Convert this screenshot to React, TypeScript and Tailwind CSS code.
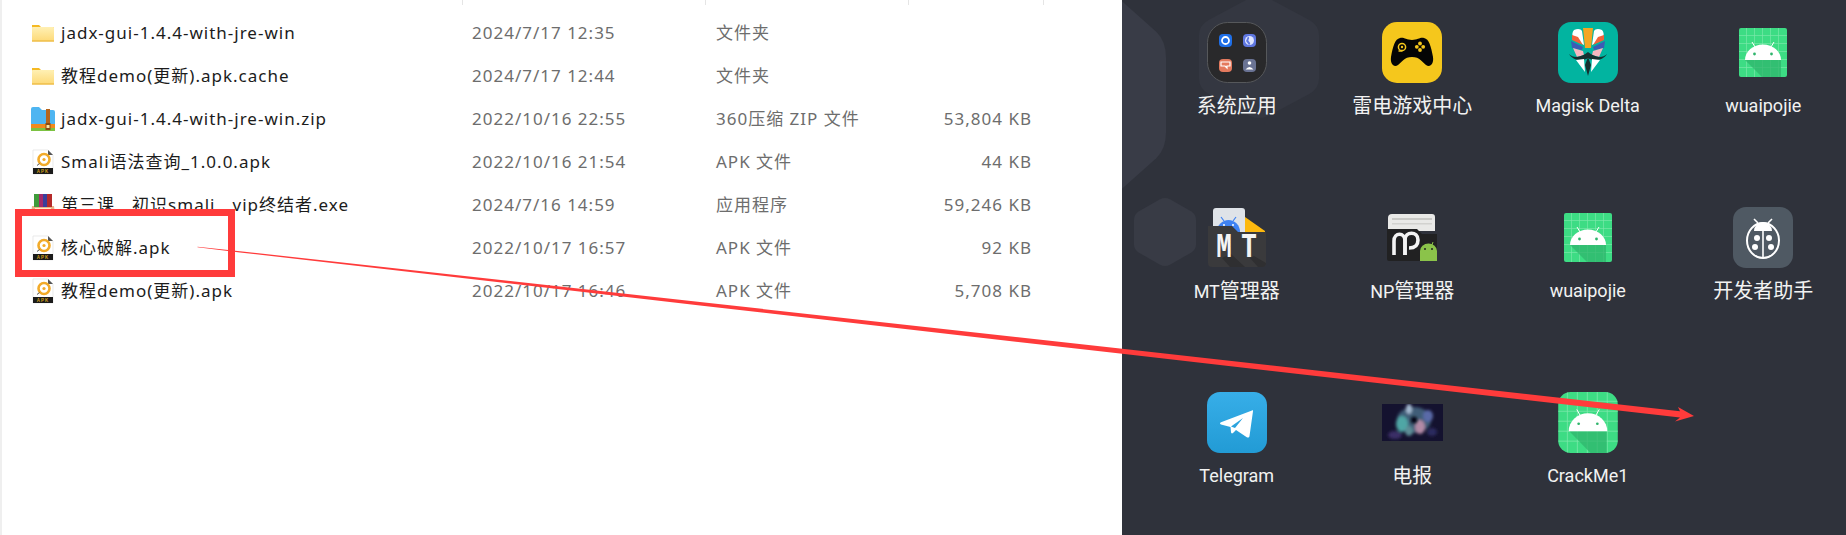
import { ReactNode } from 'react'

const files = [
  { name: 'jadx-gui-1.4.4-with-jre-win', date: '2024/7/17 12:35', type: '文件夹', size: '', icon: 'folder' },
  { name: '教程demo(更新).apk.cache', date: '2024/7/17 12:44', type: '文件夹', size: '', icon: 'folder' },
  { name: 'jadx-gui-1.4.4-with-jre-win.zip', date: '2022/10/16 22:55', type: '360压缩 ZIP 文件', size: '53,804 KB', icon: 'zip' },
  { name: 'Smali语法查询_1.0.0.apk', date: '2022/10/16 21:54', type: 'APK 文件', size: '44 KB', icon: 'apk' },
  { name: '第三课__初识smali__vip终结者.exe', date: '2024/7/16 14:59', type: '应用程序', size: '59,246 KB', icon: 'exe' },
  { name: '核心破解.apk', date: '2022/10/17 16:57', type: 'APK 文件', size: '92 KB', icon: 'apk' },
  { name: '教程demo(更新).apk', date: '2022/10/17 16:46', type: 'APK 文件', size: '5,708 KB', icon: 'apk' },
]

function FileIcon({ kind }: { kind: string }) {
  if (kind === 'folder') {
    return (
      <svg width="24" height="24" viewBox="0 0 24 24">
        <defs>
          <linearGradient id="fold" x1="0" y1="0" x2="0" y2="1">
            <stop offset="0" stopColor="#fff0b4" />
            <stop offset="1" stopColor="#fdd976" />
          </linearGradient>
        </defs>
        <path d="M1 4h7l2 2h13v2H1z" fill="#f5b923" />
        <rect x="1" y="6" width="22" height="14.500" rx="0.5" fill="url(#fold)" />
        <rect x="1" y="19.500" width="22" height="1" fill="#e8b030" />
      </svg>
    )
  }
  if (kind === 'zip') {
    return (
      <svg width="24" height="26" viewBox="0 0 24 26">
        <path d="M0 3q0-2 2-2h6l3 3h11q2 0 2 2v14H0z" fill="#4eb5f1" />
        <rect x="0" y="18" width="24" height="4" fill="#f08a1d" />
        <rect x="0" y="22" width="24" height="3" fill="#7cc242" />
        <rect x="15" y="3" width="4" height="15" fill="#b5651d" />
        <rect x="14.500" y="17" width="5" height="7" fill="#8a4b12" />
        <rect x="15.500" y="19" width="3" height="3" fill="#fbe3a0" />
      </svg>
    )
  }
  if (kind === 'exe') {
    return (
      <svg width="24" height="26" viewBox="0 0 24 26">
        <path d="M1 14h22l1 8q0 2-2 2H2q-2 0-2-2z" fill="#e8b48a" />
        <rect x="4" y="16" width="16" height="4" fill="#fdf0c8" />
        <rect x="3" y="2" width="5" height="13" fill="#3f9b3a" />
        <rect x="8" y="2" width="4" height="13" fill="#a52a6a" />
        <rect x="12" y="2" width="4" height="13" fill="#3a3f9b" />
        <rect x="16" y="2" width="5" height="13" fill="#b52a2a" />
      </svg>
    )
  }
  return (
    <svg width="24" height="26" viewBox="0 0 24 26">
      <path d="M2 1h15l5 5v19H2z" fill="#fff" stroke="#dcdcdc" strokeWidth="0.6" />
      <path d="M17 1l5 5h-5z" fill="#555" />
      <circle cx="13" cy="10.500" r="5.500" fill="none" stroke="#f2ab2a" strokeWidth="2.600" />
      <circle cx="13" cy="10.500" r="1.600" fill="#f2ab2a" />
      <path d="M6 16.500l2.500-2" stroke="#555" strokeWidth="1" />
      <rect x="2" y="19" width="20" height="6" fill="#1b1b1b" />
      <text x="12" y="24" textAnchor="middle" fontSize="4.500" fontWeight="700" fill="#d9a21c" fontFamily="Liberation Sans">APK</text>
    </svg>
  )
}

function AndroidIcon({ rounded, id }: { rounded?: boolean; id: string }) {
  const w = rounded ? 60 : 48
  const h = rounded ? 61 : 49
  return (
    <svg width={w} height={h} viewBox="0 0 48 49">
      <defs>
        <clipPath id={id}>
          <rect width="48" height="49" rx={rounded ? 10 : 2} />
        </clipPath>
      </defs>
      <g clipPath={`url(#${id})`}>
        <rect width="48" height="49" fill="#3ddc84" />
        {[7, 15, 23, 31, 39].map((p) => (
          <rect key={p} x={p} y="0" width="1" height="49" fill="#7de8ab" opacity="0.65" />
        ))}
        {[7, 15, 23, 31, 39].map((p) => (
          <rect key={p} x="0" y={p} width="48" height="1" fill="#7de8ab" opacity="0.65" />
        ))}
        {rounded ? (
          <path d="M9 31.500h30v17.500H26z" fill="#2fb56c" opacity="0.75" />
        ) : (
          <path d="M6 32h36v17H23z" fill="#2fb56c" opacity="0.75" />
        )}
      </g>
      {rounded ? (
        <>
          <path d="M15 14l2.500 4.500M33 14l-2.500 4.500" stroke="#fff" strokeWidth="0.8" />
          <path d="M8.500 31.500a15.500 14.500 0 0 1 31 0z" fill="#fff" />
          <circle cx="16.500" cy="25.500" r="1.100" fill="#2fb56c" />
          <circle cx="31.500" cy="25.500" r="1.100" fill="#2fb56c" />
        </>
      ) : (
        <>
          <path d="M13 14l3 5M35 14l-3 5" stroke="#fff" strokeWidth="1" />
          <path d="M6 32a18 15.500 0 0 1 36 0z" fill="#fff" />
          <circle cx="15.500" cy="26" r="1.400" fill="#2fb56c" />
          <circle cx="32.500" cy="26" r="1.400" fill="#2fb56c" />
        </>
      )}
    </svg>
  )
}

function SystemFolder() {
  return (
    <svg width="60" height="61" viewBox="0 0 60 61">
      <rect x="0.5" y="0.5" width="59" height="60" rx="20" fill="#29292b" stroke="#56585b" />
      <rect x="12" y="12" width="13" height="13" rx="4" fill="#1f6fe8" />
      <circle cx="18.500" cy="18.500" r="3.500" fill="none" stroke="#fff" strokeWidth="1.800" />
      <rect x="36" y="12" width="13" height="13" rx="4" fill="#5f77e0" />
      <circle cx="42.500" cy="18.500" r="4.500" fill="#dfe6ff" />
      <path d="M41 14.500c3 2-1 3 1 5s1 3 0 3.500l-3-4z" fill="#5f77e0" />
      <rect x="12" y="37" width="13" height="13" rx="4" fill="#e47a5e" />
      <path d="M14 40h9v4h-3v2l-2-2h-4z" fill="none" stroke="#fff" strokeWidth="1.200" />
      <rect x="36" y="37" width="13" height="13" rx="4" fill="#6a7394" />
      <circle cx="42.500" cy="41" r="1.800" fill="#fff" />
      <path d="M38.500 47.500q4-5 8 0z" fill="#fff" />
    </svg>
  )
}

function GameIcon() {
  return (
    <svg width="60" height="61" viewBox="0 0 60 61">
      <rect width="60" height="61" rx="15" fill="#f5c71c" />
      <path d="M18 16C22 15 24 18 30 18C36 18 38 15 42 16C47 17 49 24 51 35C52 42 48 46 44 43C40 40 38 35 30 35C22 35 20 40 16 43C12 46 8 42 9 35C11 24 13 17 18 16Z" fill="#050505" />
      <circle cx="20" cy="25" r="3.600" fill="none" stroke="#f5c71c" strokeWidth="1.500" />
      <circle cx="20" cy="25" r="1.200" fill="#f5c71c" />
      <path d="M16.500 29h4" stroke="#f5c71c" strokeWidth="1.500" />
      <circle cx="38" cy="21.500" r="1.900" fill="#f5c71c" />
      <circle cx="38" cy="28" r="1.900" fill="#f5c71c" />
      <circle cx="34.800" cy="24.800" r="1.900" fill="#f5c71c" />
      <circle cx="41.200" cy="24.800" r="1.900" fill="#f5c71c" />
    </svg>
  )
}

function MagiskIcon() {
  return (
    <svg width="60" height="61" viewBox="0 0 60 61">
      <rect width="60" height="61" rx="13" fill="#02b4a0" />
      <path d="M25 6h10l-2 20h-6z" fill="#f5a623" />
      <path d="M16 8c4-2 7-1 8 1l2 14-11-6c-1-4-1-7 1-9zM44 8c-4-2-7-1-8 1l-2 14 11-6c1-4 1-7-1-9z" fill="#fff" />
      <path d="M14 13l6 2 5 8-11-5zM46 13l-6 2-5 8 11-5z" fill="#f1623a" />
      <path d="M13 19l12 6-1 3-10-2zM47 19l-12 6 1 3 10-2z" fill="#3c5bb5" />
      <path d="M15 26l10 3 1 4-7 2zM45 26l-10 3-1 4 7 2z" fill="#f6b7c0" />
      <path d="M11 32c5 5 13 3 19-2 6 5 14 7 19 2-3 6-13 8-19 4-6 4-16 2-19-4z" fill="#15302f" />
      <path d="M18 38l8-1 1 13zM42 38l-8-1-1 13z" fill="#fff" />
      <path d="M30 35l3 8-3 11-3-11z" fill="#15302f" />
    </svg>
  )
}

function MtIcon() {
  return (
    <svg width="58" height="59" viewBox="0 0 58 59">
      <rect x="5" y="0" width="32" height="30" rx="3" fill="#dfe3e8" />
      <path d="M9 24a11.500 12 0 0 1 23 0v6H9z" fill="#3f82f2" />
      <circle cx="16" cy="17" r="1" fill="#fff" />
      <circle cx="25" cy="17" r="1" fill="#fff" />
      <path d="M13 9l3 4M28 9l-3 4" stroke="#3f82f2" strokeWidth="1.200" />
      <path d="M37 9l20 14v4H37z" fill="#fdb90f" />
      <path d="M0 18h24l6 6h28v31q0 4-4 4H4q-4 0-4-4z" fill="#3a3a3c" />
      <path d="M14 50l9-4 14 13H22zM42 50l4-2 12 7q0 4-4 4h-4z" fill="#2f2f31" />
      <text transform="translate(16 49) scale(0.72 1)" textAnchor="middle" fontSize="36" fontWeight="700" fill="#f4f4f4" fontFamily="Liberation Mono">M</text>
      <text transform="translate(41 49) scale(0.72 1)" textAnchor="middle" fontSize="36" fontWeight="700" fill="#f4f4f4" fontFamily="Liberation Mono">T</text>
    </svg>
  )
}

function NpIcon() {
  return (
    <svg width="50" height="47" viewBox="0 0 50 47">
      <path d="M1 4q0-4 4-4h40q3 0 3 3v14H1z" fill="#e9e9e7" />
      <rect x="5" y="4" width="40" height="2" fill="#c9c9c6" />
      <rect x="5" y="9" width="40" height="1.500" fill="#d2d2cf" />
      <path d="M0 15h30l5 5h15v25q0 2-2 2H2q-2 0-2-2z" fill="#212122" />
      <path d="M7 41V27c0-9 11-9 11 0v14" fill="none" stroke="#f4f4f4" strokeWidth="3.600" />
      <path d="M18 41V26c0-9 13-9 13 0 0 6-4 8-9 8" fill="none" stroke="#f4f4f4" strokeWidth="3.600" />
      <path d="M33 47V37a8.500 7.500 0 0 1 17 0v10z" fill="#8bc34a" />
      <path d="M38 30l2 2M46 28l-1 3" stroke="#8bc34a" strokeWidth="1" />
      <circle cx="38" cy="35" r="1" fill="#222" />
      <circle cx="45" cy="35" r="1" fill="#222" />
    </svg>
  )
}

function BugIcon() {
  return (
    <svg width="60" height="61" viewBox="0 0 60 61">
      <rect width="60" height="61" rx="13" fill="#4f5963" />
      <path d="M21 12l4 4M39 12l-4 4" stroke="#fff" strokeWidth="1.600" />
      <path d="M21 24a9 9 0 0 1 18 0z" fill="#fff" />
      <ellipse cx="30" cy="33.500" rx="16" ry="17.500" fill="none" stroke="#fff" strokeWidth="2" />
      <path d="M30 24v27" stroke="#fff" strokeWidth="1.600" />
      <circle cx="24" cy="31" r="3" fill="#fff" />
      <circle cx="36" cy="31" r="3" fill="#fff" />
      <circle cx="22" cy="40" r="3" fill="#fff" />
      <circle cx="38" cy="40" r="3" fill="#fff" />
    </svg>
  )
}

function TelegramIcon() {
  return (
    <svg width="60" height="61" viewBox="0 0 60 61">
      <defs>
        <linearGradient id="tg" x1="0" y1="0" x2="0" y2="1">
          <stop offset="0" stopColor="#37aee8" />
          <stop offset="1" stopColor="#229bd5" />
        </linearGradient>
      </defs>
      <rect width="60" height="61" rx="13" fill="url(#tg)" />
      <path d="M45 18.500c.6-.4 1.200 0 1 .8L42.500 44c-.2 1.500-1.500 2-2.700 1.200L29 38l-3 3c-1 .8-2 .3-2-1l-.5-5-9.500-2.500c-1.300-.4-1.300-1.600 0-2.200zM36 26 24 34.500l4 1.500z" fill="#fff" fillRule="evenodd" />
    </svg>
  )
}

function BlurImage() {
  return (
    <svg width="61" height="37" viewBox="0 0 61 37">
      <defs>
        <filter id="soft" x="-30%" y="-30%" width="160%" height="160%">
          <feGaussianBlur stdDeviation="1.800" />
        </filter>
        <clipPath id="blurclip">
          <rect width="61" height="37" />
        </clipPath>
      </defs>
      <g clipPath="url(#blurclip)">
        <rect width="61" height="37" fill="#14122f" />
        <g filter="url(#soft)">
          <ellipse cx="32" cy="16" rx="17" ry="13" fill="#3f5d78" />
          <ellipse cx="20" cy="20" rx="6" ry="8" fill="#4fa6a5" />
          <ellipse cx="38" cy="23" rx="5" ry="7" fill="#b38aa6" />
          <ellipse cx="46" cy="12" rx="5" ry="6" fill="#5a6aa8" />
          <ellipse cx="27" cy="5" rx="3" ry="5" fill="#a6bbd2" />
          <ellipse cx="13" cy="31" rx="7" ry="4" fill="#3a2f66" />
          <ellipse cx="27" cy="27" rx="4" ry="5" fill="#5d8c95" />
          <ellipse cx="50" cy="28" rx="5" ry="4" fill="#2b2a5e" />
        </g>
        <ellipse cx="32" cy="16" rx="3" ry="3.200" fill="#050508" filter="url(#soft)" />
      </g>
    </svg>
  )
}

function Hexagon({ className }: { className: string }) {
  return (
    <svg className={className} viewBox="0 0 100 112" preserveAspectRatio="none">
      <path d="M42 2q8-4 16 0l34 20q8 5 8 14v40q0 9-8 14l-34 20q-8 4-16 0L8 90q-8-5-8-14V36q0-9 8-14z" fill="currentColor" />
    </svg>
  )
}

function Cjk({ children }: { children: ReactNode }) {
  return <span className="text-[20px]">{children}</span>
}

const apps = [
  { label: <Cjk>系统应用</Cjk>, icon: <SystemFolder /> },
  { label: <Cjk>雷电游戏中心</Cjk>, icon: <GameIcon /> },
  { label: 'Magisk Delta', icon: <MagiskIcon /> },
  { label: 'wuaipojie', icon: <AndroidIcon id="droid-a" /> },
  { label: <>MT<Cjk>管理器</Cjk></>, icon: <MtIcon /> },
  { label: <>NP<Cjk>管理器</Cjk></>, icon: <NpIcon /> },
  { label: 'wuaipojie', icon: <AndroidIcon id="droid-b" /> },
  { label: <Cjk>开发者助手</Cjk>, icon: <BugIcon /> },
  { label: 'Telegram', icon: <TelegramIcon /> },
  { label: <Cjk>电报</Cjk>, icon: <BlurImage /> },
  { label: 'CrackMe1', icon: <AndroidIcon rounded id="droid-c" /> },
]

export default function App() {
  return (
    <div className="relative flex h-[535px] w-[1846px] overflow-hidden bg-white">
      <div className="w-[1122px] shrink-0 border-l-2 border-[#efefef] font-['Noto_Sans','Noto_Sans_CJK_SC',sans-serif] text-[17px] tracking-[1px]">
        <div className="grid h-[5px] grid-cols-[461px_243px_203px_135px]">
          <div className="border-r border-[#e5e5e5]" />
          <div className="border-r border-[#e5e5e5]" />
          <div className="border-r border-[#e5e5e5]" />
          <div className="border-r border-[#e5e5e5]" />
        </div>
        <div className="pt-[6px]">
          {files.map((f) => (
            <div key={f.name} className="grid h-[43px] grid-cols-[461px_243px_203px_135px] items-center">
              <div className="flex items-center text-[#1c1c1c]">
                <span className="flex w-[59px] justify-end pr-[6px]">
                  <FileIcon kind={f.icon} />
                </span>
                <span className="whitespace-nowrap">{f.name}</span>
              </div>
              <div className="pl-[9px] text-[#6d6d6d]">{f.date}</div>
              <div className="pl-[10px] whitespace-nowrap text-[#6d6d6d]">{f.type}</div>
              <div className="pr-[12px] text-right text-[#6d6d6d]">{f.size}</div>
            </div>
          ))}
        </div>
      </div>

      <div className="relative flex-1 overflow-hidden bg-[#2f323b]">
        <Hexagon className="absolute top-[-9px] left-[-78px] h-[208px] w-[122px] text-[#393c47]" />
        <Hexagon className="absolute top-[-4px] left-[77px] h-[122px] w-[120px] text-[#343741]" />
        <Hexagon className="absolute top-[198px] left-[12px] h-[68px] w-[62px] text-[#383b45]" />
        <div className="relative grid grid-cols-[repeat(4,175.500px)] pt-[22px] pl-[27px] font-['Roboto','Noto_Sans_CJK_SC',sans-serif] text-[18px] text-[#f2f2f2]">
          {apps.map((a, i) => (
            <div key={i} className="flex h-[185px] flex-col items-center">
              <div className="flex h-[61px] items-center justify-center">{a.icon}</div>
              <div className="mt-[11px] h-[24px] leading-[24px] whitespace-nowrap">{a.label}</div>
            </div>
          ))}
        </div>
      </div>

      {/* annotation drawn on top of the screenshot */}
      <div className="absolute top-[209px] left-[15px] h-[68px] w-[220px] border-[7px] border-[#ff3b3b]" />
      <svg className="pointer-events-none absolute top-0 left-0" width="1846" height="535">
        <polygon
          points="197.500,246.700 240,251.200 700,302 1120,348.600 1680,411.200 1678,407 1694,416 1675,421.500 1680,417.600 1120,353.600 700,305.400 240,252.400 197.500,247.300"
          fill="#ff3b3b"
        />
      </svg>
    </div>
  )
}
